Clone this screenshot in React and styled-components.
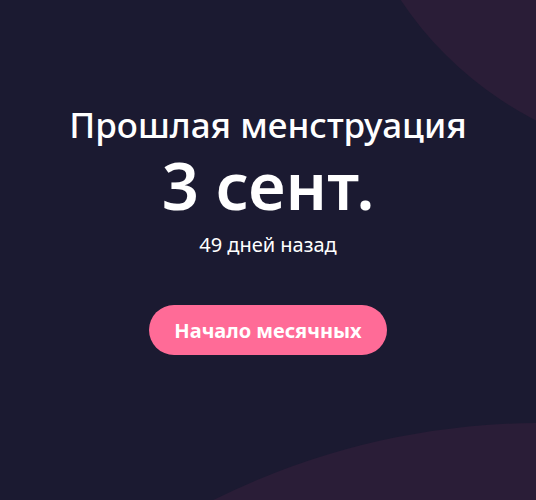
import React from 'react';
import styled, {createGlobalStyle} from 'styled-components';

const Global = createGlobalStyle`
  html, body { margin: 0; padding: 0; }
  body { background: #1b1a31; font-family: "Noto Sans", "Open Sans", sans-serif; }
`;

const Screen = styled.div`
  position: relative;
  width: 536px;
  height: 500px;
  overflow: hidden;
  background: #1b1a31;
  display: flex;
  flex-direction: column;
  align-items: center;
  padding-top: 101px;
  box-sizing: border-box;
`;

const Blob = styled.div`
  position: absolute;
  border-radius: 50%;
  background: #2a1d37;
  width: ${p => p.size}px;
  height: ${p => p.size}px;
  left: ${p => p.x}px;
  top: ${p => p.y}px;
`;

const Content = styled.div`
  position: relative;
  display: flex;
  flex-direction: column;
  align-items: center;
  color: #fff;
`;

const Title = styled.div`
  font-size: 35px;
  font-weight: 500;
  line-height: 48px;
`;

const Date = styled.div`
  font-size: 65px;
  font-weight: 600;
  line-height: 72px;
`;

const Ago = styled.div`
  font-size: 20px;
  line-height: 28px;
  margin-top: 10px;
`;

const StartBtn = styled.button`
  margin-top: 46px;
  width: 238px;
  height: 50px;
  border: none;
  border-radius: 25px;
  background: #ff6b97;
  color: #fff;
  font-family: inherit;
  font-size: 20px;
  font-weight: 700;
`;

export default function App() {
  return (
    <>
      <Global />
      <Screen>
        <Blob size={720} x={340} y={-560} />
        <Blob size={1462} x={-191} y={423} />
        <Content>
          <Title>Прошлая менструация</Title>
          <Date>3 сент.</Date>
          <Ago>49 дней назад</Ago>
          <StartBtn>Начало месячных</StartBtn>
        </Content>
      </Screen>
    </>
  );
}
